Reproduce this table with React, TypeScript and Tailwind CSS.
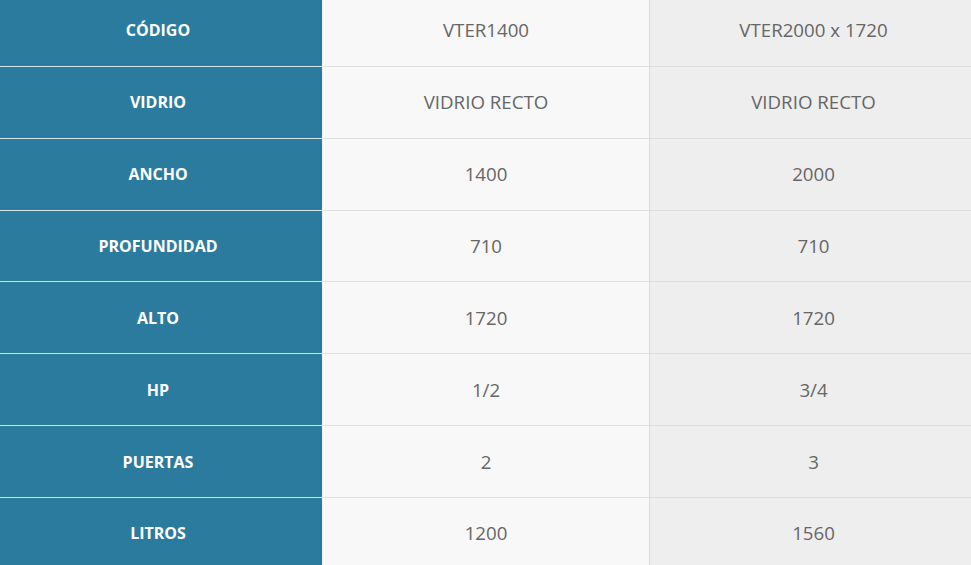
import React from "react";

const rows: [string, string, string][] = [
  ["CÓDIGO", "VTER1400", "VTER2000 x 1720"],
  ["VIDRIO", "VIDRIO RECTO", "VIDRIO RECTO"],
  ["ANCHO", "1400", "2000"],
  ["PROFUNDIDAD", "710", "710"],
  ["ALTO", "1720", "1720"],
  ["HP", "1/2", "3/4"],
  ["PUERTAS", "2", "3"],
  ["LITROS", "1200", "1560"],
];

export default function App() {
  return (
    <div
      className="w-[971px] h-[565px] overflow-hidden bg-white"
      style={{ fontFamily: '"Open Sans", "Noto Sans", sans-serif' }}
    >
      <div className="grid grid-cols-[322px_327px_328px] w-[977px]">
        {rows.map(([label, a, b], i) => {
          const h = i === 0 ? "h-[67px] pb-[6px]" : "h-[71.83px]";
          return (
            <React.Fragment key={label}>
              <div
                className={`${h} flex items-center justify-center pr-[6px] bg-[#2b7b9e] border-b border-[#d6e6ee] text-white font-bold text-[16px]`}
              >
                {label}
              </div>
              <div
                className={`${h} flex items-center justify-center bg-[#f8f8f8] border-b border-l border-l-[#f0f0f0] border-b-[#dedede] text-[#666666] text-[18.7px]`}
              >
                {a}
              </div>
              <div
                className={`${h} flex items-center justify-center bg-[#eeeeee] border-b border-l border-[#dcdcdc] text-[#666666] text-[18.7px]`}
              >
                {b}
              </div>
            </React.Fragment>
          );
        })}
      </div>
    </div>
  );
}
